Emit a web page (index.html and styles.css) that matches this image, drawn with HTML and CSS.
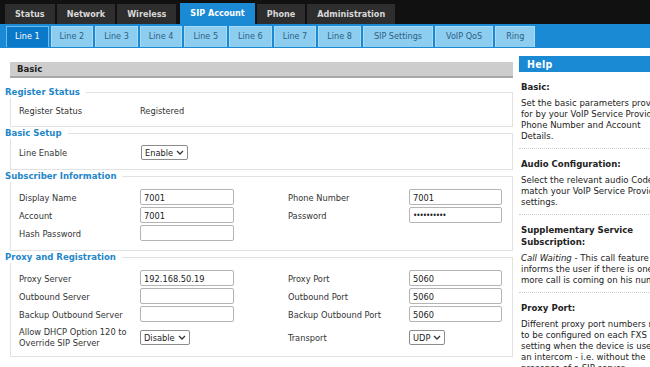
FILE: index.html
```html
<!DOCTYPE html>
<html lang="en">
<head>
    <meta charset="UTF-8">
    <title>SIP Account - Line 1</title>
    <link rel="stylesheet" href="styles.css">
</head>
<body>
    <div class="topnav">
        <a class="tab">Status</a>
        <a class="tab">Network</a>
        <a class="tab">Wireless</a>
        <a class="tab active">SIP Account</a>
        <a class="tab">Phone</a>
        <a class="tab">Administration</a>
    </div>
    <div class="subnav">
        <a class="subtab active">Line 1</a>
        <a class="subtab">Line 2</a>
        <a class="subtab">Line 3</a>
        <a class="subtab">Line 4</a>
        <a class="subtab">Line 5</a>
        <a class="subtab">Line 6</a>
        <a class="subtab">Line 7</a>
        <a class="subtab">Line 8</a>
        <a class="subtab more">SIP Settings</a>
        <a class="subtab more">VoIP QoS</a>
        <a class="subtab more">Ring</a>
    </div>

    <div class="page">
        <div class="main">
            <div class="page-title">Basic</div>

            <fieldset class="single first">
                <legend>Register Status</legend>
                <div class="form-grid">
                    <span class="label">Register Status</span>
                    <span class="value">Registered</span>
                </div>
            </fieldset>

            <fieldset class="single">
                <legend>Basic Setup</legend>
                <div class="form-grid">
                    <span class="label">Line Enable</span>
                    <span class="select select-wide">Enable <svg viewBox="0 0 8 5"><path d="M1 1l3 3 3-3"/></svg></span>
                </div>
            </fieldset>

            <fieldset>
                <legend>Subscriber Information</legend>
                <div class="form-grid">
                    <span class="label">Display Name</span>
                    <input class="text" value="7001">
                    <span class="label">Phone Number</span>
                    <input class="text short" value="7001">

                    <span class="label">Account</span>
                    <input class="text" value="7001">
                    <span class="label">Password</span>
                    <input class="text short" type="password" value="secret7001">

                    <span class="label">Hash Password</span>
                    <input class="text" value="">
                </div>
            </fieldset>

            <fieldset class="last">
                <legend>Proxy and Registration</legend>
                <div class="form-grid">
                    <span class="label">Proxy Server</span>
                    <input class="text" value="192.168.50.19">
                    <span class="label">Proxy Port</span>
                    <input class="text short" value="5060">

                    <span class="label">Outbound Server</span>
                    <input class="text" value="">
                    <span class="label">Outbound Port</span>
                    <input class="text short" value="5060">

                    <span class="label">Backup Outbound Server</span>
                    <input class="text" value="">
                    <span class="label">Backup Outbound Port</span>
                    <input class="text short" value="5060">

                    <span class="label tall">Allow DHCP Option 120 to<br>Override SIP Server</span>
                    <span class="select">Disable <svg viewBox="0 0 8 5"><path d="M1 1l3 3 3-3"/></svg></span>
                    <span class="label">Transport</span>
                    <span class="select">UDP <svg viewBox="0 0 8 5"><path d="M1 1l3 3 3-3"/></svg></span>
                </div>
            </fieldset>
        </div>

        <div class="help">
            <div class="help-title">Help</div>
            <div class="help-item">
                <h4>Basic:</h4>
                <p>Set the basic parameters provided<br>for by your VoIP Service Provider,<br>Phone Number and Account<br>Details.</p>
            </div>
            <div class="help-item">
                <h4>Audio Configuration:</h4>
                <p>Select the relevant audio Codecs to<br>match your VoIP Service Provider<br>settings.</p>
            </div>
            <div class="help-item">
                <h4>Supplementary Service<br>Subscription:</h4>
                <p><em>Call Waiting</em> - This call feature<br>informs the user if there is one<br>more call is coming on his number.</p>
            </div>
            <div class="help-item">
                <h4>Proxy Port:</h4>
                <p>Different proxy port numbers need<br>to be configured on each FXS<br>setting when the device is used as<br>an intercom - i.e. without the<br>presence of a SIP server.</p>
            </div>
        </div>
    </div>
</body>
</html>
```

FILE: styles.css
```css
body {
    font-family: "DejaVu Sans Condensed", "DejaVu Sans", sans-serif;
    font-stretch: condensed;
    font-size: 9.2px;
    color: #333;
    margin: 0;
    background: #fff;
    overflow: hidden;
    width: 650px;
    height: 367px;
}

/* top navigation */
.topnav {
    display: flex;
    align-items: flex-end;
    gap: 2px;
    height: 24px;
    padding: 0 5px;
    background: #111;
    box-sizing: border-box;
}
.tab {
    display: block;
    height: 20px;
    line-height: 20px;
    padding: 0 10px;
    background: #2e2e2e;
    color: #d8d8d8;
    font-weight: bold;
    font-size: 9px;
}
.tab.active {
    height: 21px;
    line-height: 21px;
    margin-left: 2px;
    background: #1a8ad5;
    color: #fff;
}

.subnav {
    display: flex;
    gap: 2px;
    height: 24px;
    padding: 2px 0 0 6px;
    background: #1a8ad5;
    box-sizing: border-box;
}
.subtab {
    display: block;
    height: 21px;
    line-height: 19px;
    box-sizing: border-box;
    text-align: center;
    padding: 0 8px;
    background: #8ccdf0;
    border: 1px solid #a9dbf5;
    border-bottom: none;
    color: #2f5f82;
    font-size: 9px;
}
.subtab.more { padding: 0 10px; }
.subtab.active {
    background: #0b79c9;
    border-color: #6fbcec;
    color: #fff;
}

/* page body */
.page {
    display: flex;
    align-items: flex-start;
}
.main {
    width: 508px;
    padding-left: 5px;
    flex: none;
}
.page-title {
    margin: 14px 0 8px 5px;
    height: 14px;
    line-height: 14px;
    padding-left: 7px;
    background: #cdcdcd;
    border-bottom: 2px solid #a7a7a7;
    font-weight: bold;
    font-size: 9.5px;
    color: #222;
}

fieldset {
    margin: 0 0 0 5px;
    padding: 6px 8px 8px;
    border: 1px solid #e2e2e2;
    min-width: 0;
}
fieldset.single { padding-top: 4px; padding-bottom: 8px; }
fieldset.first { padding-top: 3px; padding-bottom: 7px; }
fieldset.last { padding-bottom: 5px; }
legend {
    margin-left: -14px;
    padding: 0 6px 0 0;
    line-height: 12px;
    color: #1f87c9;
    font-weight: bold;
    font-size: 9.5px;
}

.form-grid {
    display: grid;
    grid-template-columns: 121px 148px 121px 93px;
    grid-auto-rows: minmax(18px, auto);
    align-items: center;
}
.label, .value { color: #333; }
.label.tall {
    line-height: 11px;
    padding: 3px 0;
}

.text {
    width: 94px;
    height: 16px;
    box-sizing: border-box;
    border: 1px solid #b4b4b4;
    border-radius: 2px;
    padding: 0 3px;
    font: inherit;
    color: #222;
    outline: none;
}
.text.short { width: 93px; }
.text[type="password"] { letter-spacing: -1px; font-size: 8px; }

.select {
    display: inline-flex;
    align-items: center;
    justify-self: start;
    gap: 3px;
    height: 15px;
    box-sizing: border-box;
    padding: 0 3px;
    border: 1px solid #8c8c8c;
    border-radius: 2px;
    color: #222;
}
.select svg {
    width: 8px;
    height: 5px;
    fill: none;
    stroke: #333;
    stroke-width: 1.3;
}
.select-wide { margin-left: 1px; }

/* help panel */
.help {
    margin: 8px 0 0 6px;
    width: 200px;
    flex: none;
    font-size: 9.5px;
}
.help-title {
    height: 16px;
    line-height: 16px;
    padding-left: 8px;
    background: #1a8ad5;
    color: #fff;
    font-weight: bold;
    font-size: 10.5px;
    letter-spacing: 0.3px;
}
.help-item {
    padding: 9px 0 7px 2px;
    border-bottom: 1px dotted #d0d0d0;
}
.help-item:first-of-type { padding-top: 4px; padding-bottom: 14px; }
.help-item h4 {
    margin: 0;
    line-height: 12px;
    font-size: 9.5px;
    color: #222;
}
.help-item p {
    margin: 4px 0 0;
    line-height: 11px;
    color: #222;
    white-space: nowrap;
}
```
